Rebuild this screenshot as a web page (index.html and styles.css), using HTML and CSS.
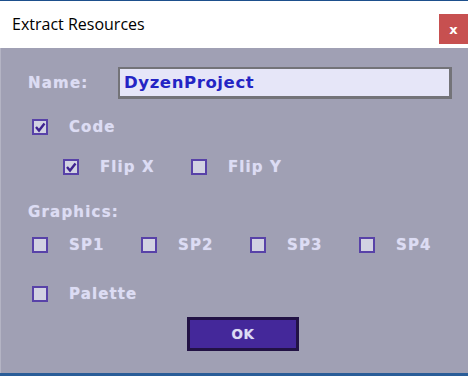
FILE: index.html
```html
<!DOCTYPE html>
<html lang="en">
<head>
    <meta charset="UTF-8">
    <title>Extract Resources</title>
    <link rel="stylesheet" href="styles.css">
</head>
<body>
    <div class="window">
        <div class="topline"></div>
        <div class="titlebar">
            <span class="title">Extract Resources</span>
            <div class="close">x</div>
        </div>
        <form class="content">
            <div class="row name-row">
                <label class="label">Name:</label>
                <div class="textbox">DyzenProject</div>
            </div>

            <div class="row code-row">
                <span class="check checked"><svg viewBox="0 0 12 12"><path d="M2 6 L5 9.5 L10.5 2.5"/></svg></span>
                <span class="text">Code</span>
            </div>

            <div class="row flip-row">
                <div class="item">
                    <span class="check checked"><svg viewBox="0 0 12 12"><path d="M2 6 L5 9.5 L10.5 2.5"/></svg></span>
                    <span class="text">Flip X</span>
                </div>
                <div class="item">
                    <span class="check"></span>
                    <span class="text">Flip Y</span>
                </div>
            </div>

            <div class="label graphics">Graphics:</div>

            <div class="row sp-row">
                <div class="item sp"><span class="check"></span><span class="text">SP1</span></div>
                <div class="item sp"><span class="check"></span><span class="text">SP2</span></div>
                <div class="item sp"><span class="check"></span><span class="text">SP3</span></div>
                <div class="item sp"><span class="check"></span><span class="text">SP4</span></div>
            </div>

            <div class="row palette-row">
                <span class="check"></span>
                <span class="text">Palette</span>
            </div>

            <div class="buttons">
                <button type="button" class="ok">OK</button>
            </div>
        </form>
        <div class="bottomline"></div>
    </div>
</body>
</html>
```

FILE: styles.css
```css
body {
    margin: 0;
    padding: 0;
    font-family: "DejaVu Sans", Verdana, sans-serif;
}
.window {
    width: 468px;
    height: 376px;
    display: flex;
    flex-direction: column;
    overflow: hidden;
}
.topline {
    height: 1px;
    background-color: #1d4f8c;
}
.titlebar {
    height: 47px;
    background-color: #fff;
    display: flex;
    justify-content: space-between;
    align-items: flex-start;
}
.title {
    font-family: "Open Sans", "Noto Sans", sans-serif;
    font-size: 16px;
    color: #000;
    margin-left: 12px;
    margin-top: 12px;
}
.close {
    width: 29px;
    height: 30px;
    margin-top: 13px;
    background-color: #c75050;
    color: #fff;
    font-family: "DejaVu Sans", sans-serif;
    font-weight: bold;
    font-size: 13px;
    display: flex;
    justify-content: center;
    align-items: center;
    box-sizing: border-box;
}
.content {
    flex: 1;
    margin: 0;
    background-color: #a0a0b4;
    border-left: 1px solid #b4b4c4;
    padding: 19px 0 0 31px;
    box-sizing: border-box;
    color: #dcdcf4;
    font-weight: bold;
    font-size: 15px;
    line-height: 16px;
    text-shadow: 0 0 1px rgba(255, 255, 255, 0.4);
}
.row {
    display: flex;
    align-items: center;
}
.label {
    margin-left: -4px;
    letter-spacing: 1.2px;
}
.name-row .label {
    width: 90px;
}
.textbox {
    width: 334px;
    height: 32px;
    box-sizing: border-box;
    border: 2px solid #737378;
    border-right-width: 3px;
    border-bottom-width: 3px;
    background-color: #e6e6f8;
    color: #2424c4;
    font-size: 16.5px;
    letter-spacing: 0.6px;
    padding-left: 4px;
    display: flex;
    align-items: center;
    text-shadow: none;
}
.check {
    width: 16px;
    height: 16px;
    box-sizing: border-box;
    border: 2px solid #5842a8;
    background-color: #d2d2e2;
    display: inline-flex;
    flex-shrink: 0;
}
.check svg {
    width: 12px;
    height: 12px;
}
.check svg path {
    fill: none;
    stroke: #3e2290;
    stroke-width: 2.4;
}
.text {
    margin-left: 21px;
    letter-spacing: 1.1px;
}
.code-row {
    margin-top: 20px;
}
.flip-row {
    margin-top: 24px;
    margin-left: 31px;
}
.flip-row .item {
    width: 128px;
}
.item {
    display: flex;
    align-items: center;
}
.graphics {
    margin-top: 27px;
    line-height: 20px;
}
.sp-row {
    margin-top: 15px;
}
.sp {
    width: 109.5px;
}
.palette-row {
    margin-top: 33px;
}
.buttons {
    display: flex;
    margin-top: 15px;
    padding-left: 155px;
}
.ok {
    width: 112px;
    height: 34px;
    background-color: #44289a;
    border: 3px solid #221245;
    color: #dcdcf4;
    font-family: "DejaVu Sans", sans-serif;
    font-weight: bold;
    font-size: 13.5px;
    letter-spacing: 0.5px;
    padding: 0;
    text-shadow: 0 0 1px rgba(255, 255, 255, 0.4);
}
.bottomline {
    height: 3px;
    background-color: #2a5d98;
}
```
